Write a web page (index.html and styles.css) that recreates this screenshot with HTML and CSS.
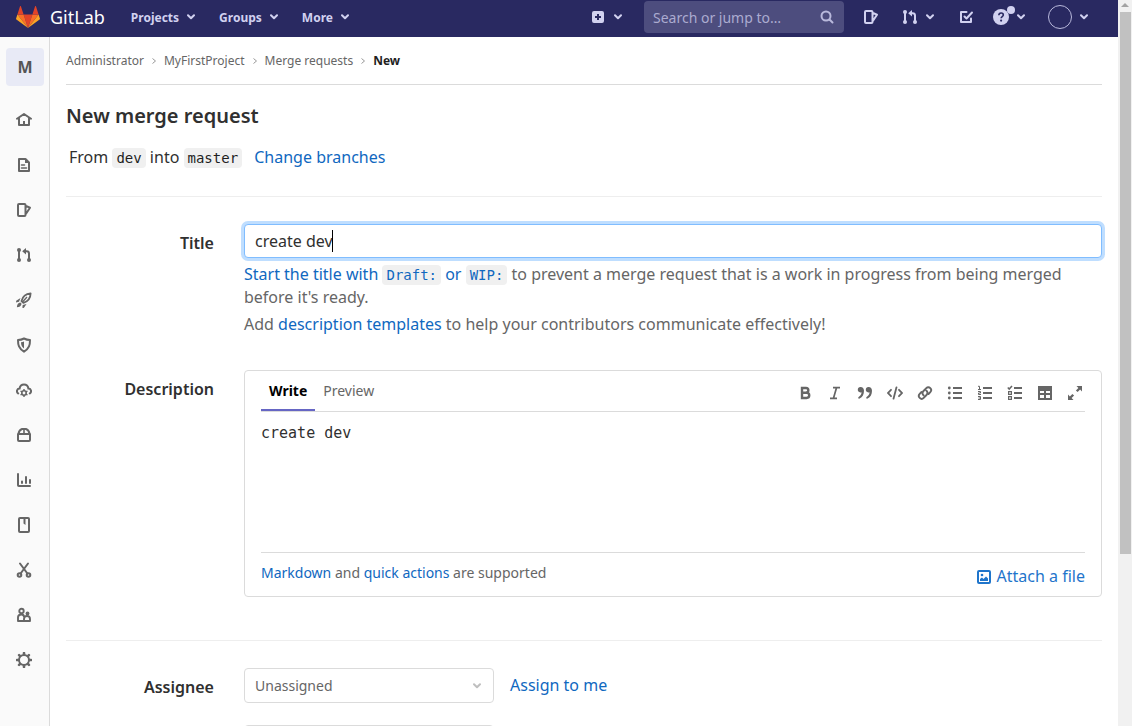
FILE: index.html
```html
<!DOCTYPE html>
<html lang="en">
<head>
<meta charset="utf-8">
<meta name="viewport" content="width=device-width, initial-scale=1">
<title>New merge request · GitLab</title>
<link rel="stylesheet" href="styles.css">
</head>
<body>
<svg class="sprite" aria-hidden="true">
  <symbol id="chevron" viewBox="0 0 8 8"><path d="M1 2.3 4 5.3 7 2.3" fill="none" stroke="currentColor" stroke-width="2" stroke-linecap="round" stroke-linejoin="round"/></symbol>
  <symbol id="issues" viewBox="0 0 16 16"><path d="M3 2h5.500a1 1 0 0 1 1 1v10a1 1 0 0 1-1 1H3a1 1 0 0 1-1-1V3a1 1 0 0 1 1-1zM10 4l4 1.700-4 6" fill="none" stroke="currentColor" stroke-width="2" stroke-linejoin="round"/></symbol>
  <symbol id="merge" viewBox="0 0 16 16"><g fill="none" stroke="currentColor" stroke-width="2"><path d="M3 3v10M9 4.2h1.6A2.4 2.4 0 0 1 13 6.6V13"/></g><g fill="currentColor"><circle cx="3" cy="3" r="2"/><circle cx="3" cy="13" r="2"/><circle cx="13" cy="13" r="2"/><path d="M10 1v6.6L6.2 4.3z"/></g></symbol>
</svg>
<div class="window">
  <header class="navbar">
    <a class="brand" href="#">
      <svg class="tanuki" viewBox="0 0 24 22" aria-hidden="true"><path fill="#e24329" d="m12 22 4.4-13.5H7.6z"/><path fill="#fc6d26" d="M12 22 7.6 8.500H1.4z"/><path fill="#fca326" d="M1.400 8.500.1 12.600a.9.9 0 0 0 .3 1L12 22z"/><path fill="#e24329" d="M1.400 8.500h6.200L4.900.3a.45.45 0 0 0-.86 0z"/><path fill="#fc6d26" d="m12 22 4.400-13.500h6.200z"/><path fill="#fca326" d="m22.600 8.500 1.300 4.100a.9.9 0 0 1-.3 1L12 22z"/><path fill="#e24329" d="M22.600 8.500h-6.200L19.100.3a.45.45 0 0 1 .86 0z"/></svg>
      <span>GitLab</span>
    </a>
    <nav class="menus" aria-label="Main">
      <button class="menu">Projects<svg class="chev"><use href="#chevron"/></svg></button>
      <button class="menu">Groups<svg class="chev"><use href="#chevron"/></svg></button>
      <button class="menu">More<svg class="chev"><use href="#chevron"/></svg></button>
    </nav>
    <div class="tools">
      <button class="tool" aria-label="Create new"><svg class="icon" viewBox="0 0 16 16"><path fill="currentColor" fill-rule="evenodd" d="M4 2h8a2 2 0 0 1 2 2v8a2 2 0 0 1-2 2H4a2 2 0 0 1-2-2V4a2 2 0 0 1 2-2zm3 3v2H5v2h2v2h2V9h2V7H9V5z"/></svg><svg class="chev"><use href="#chevron"/></svg></button>
      <form class="search" role="search">
        <input class="search-input" type="search" placeholder="Search or jump to…" aria-label="Search or jump to">
        <svg class="search-icon" viewBox="0 0 16 16" aria-hidden="true"><g fill="none" stroke="currentColor" stroke-width="2" stroke-linecap="round"><circle cx="7" cy="7" r="4.500"/><path d="m10.500 10.500 3 3"/></g></svg>
      </form>
      <button class="tool near" aria-label="Issues"><svg class="icon"><use href="#issues"/></svg></button>
      <button class="tool" aria-label="Merge requests"><svg class="icon"><use href="#merge"/></svg><svg class="chev"><use href="#chevron"/></svg></button>
      <button class="tool far" aria-label="To-Do List"><svg class="icon" viewBox="0 0 16 16"><g fill="none" stroke="currentColor" stroke-width="2" stroke-linecap="round" stroke-linejoin="round"><path d="M8.500 3H3v10h10V9.500"/><path d="m6.500 7.500 2 2L14 3.500"/></g></svg></button>
      <button class="tool near help" aria-label="Help"><svg class="icon" viewBox="0 0 16 16"><circle cx="8" cy="8" r="8" fill="currentColor"/><path d="M5.800 6.300C5.900 4.800 6.800 4 8.100 4s2.200.8 2.200 2c0 1.500-2.200 1.600-2.200 3.300" fill="none" stroke="#292961" stroke-width="1.600"/><circle cx="8.100" cy="11.600" r="1.100" fill="#292961"/></svg><i class="dot"></i><svg class="chev"><use href="#chevron"/></svg></button>
      <button class="tool" aria-label="Account"><span class="avatar"></span><svg class="chev"><use href="#chevron"/></svg></button>
    </div>
  </header>
  <div class="body">
    <nav class="sidebar" aria-label="Project">
      <a class="project" href="#">M</a>
      <a class="side" href="#" aria-label="Project information"><svg class="icon" viewBox="0 0 16 16"><g fill="none" stroke="currentColor" stroke-width="2" stroke-linecap="round" stroke-linejoin="round"><path d="M1 6.800 8 2l7 4.800M3 6.500V13h10V6.500"/></g><path fill="currentColor" d="M7 9h2v4H7z"/></svg></a>
      <a class="side" href="#" aria-label="Repository"><svg class="icon" viewBox="0 0 16 16"><path d="M3 2h6.500L13 5.500V14H3z" fill="none" stroke="currentColor" stroke-width="2" stroke-linejoin="round"/><path d="M5.500 8h3M5.500 11h5" stroke="currentColor" stroke-width="1.600" stroke-linecap="round"/><path fill="currentColor" d="M9 2v4h4z"/></svg></a>
      <a class="side" href="#" aria-label="Issues"><svg class="icon"><use href="#issues"/></svg></a>
      <a class="side" href="#" aria-label="Merge requests"><svg class="icon"><use href="#merge"/></svg></a>
      <a class="side" href="#" aria-label="CI/CD"><svg class="icon" viewBox="0 0 16 16"><path d="M5.500 9C6.500 5 9.500 1.900 14.600 1.400 14.500 6.500 11.500 9.500 7.400 10.800z" fill="none" stroke="currentColor" stroke-width="1.800" stroke-linejoin="round"/><path d="M6.500 10 11 5" stroke="currentColor" stroke-width="1.300"/><path fill="currentColor" d="M4.500 6 .2 8.700 0 10.500l3-.8zM10.500 12l-2.700 4-1.500-.2.400-2.800zM4.300 10.500C2 11 1 12.500.9 15.200c2.500 0 4.200-.9 4.700-3.400z"/></svg></a>
      <a class="side" href="#" aria-label="Security"><svg class="icon" viewBox="0 0 16 16"><path d="M8 1.500c2 1 4 1.400 6 1.400 0 5-.7 8.600-6 11.800C2.700 11.500 2 7.900 2 2.900c2 0 4-.4 6-1.400z" fill="none" stroke="currentColor" stroke-width="2" stroke-linejoin="round"/><path fill="currentColor" d="M8 4.500v7C6 10 5 8.200 5 5.300c1.200 0 2.200-.3 3-.8z"/></svg></a>
      <a class="side" href="#" aria-label="Operations"><svg class="icon" viewBox="0 0 16 16"><path d="M2.200 11.500C.2 10 .6 6.700 3.600 6.500 4 3.800 6 2.500 8 2.500s4 1.300 4.400 4c3 .2 3.400 3.500 1.400 5" fill="none" stroke="currentColor" stroke-width="2" stroke-linecap="round"/><circle cx="8" cy="11" r="2.200" fill="none" stroke="currentColor" stroke-width="1.600"/><path d="M8 7v2M8 13v2M4.500 9l1.600.9M9.900 12.100l1.600.9M4.500 13l1.600-.9M9.900 9.900l1.600-.9" stroke="currentColor" stroke-width="1.400"/></svg></a>
      <a class="side" href="#" aria-label="Packages"><svg class="icon" viewBox="0 0 16 16"><path d="M2 7h12v6a1 1 0 0 1-1 1H3a1 1 0 0 1-1-1zM2.500 6.500C3 4.500 4.500 2.500 6 2h4c1.500.5 3 2.500 3.500 4.500" fill="none" stroke="currentColor" stroke-width="2" stroke-linejoin="round"/><path fill="currentColor" d="M7.200 2h1.600v4H7.200z"/></svg></a>
      <a class="side" href="#" aria-label="Analytics"><svg class="icon" viewBox="0 0 16 16"><path d="M2 2v11.200a.8.8 0 0 0 .8.8H14M6 9.500V11M10 5v6M14 8v3" fill="none" stroke="currentColor" stroke-width="2" stroke-linecap="round"/></svg></a>
      <a class="side" href="#" aria-label="Wiki"><svg class="icon" viewBox="0 0 16 16"><rect x="3" y="1" width="10" height="14" rx="1" fill="none" stroke="currentColor" stroke-width="2"/><path fill="currentColor" d="M7.500 1h2v7l-2-1.500z"/></svg></a>
      <a class="side" href="#" aria-label="Snippets"><svg class="icon" viewBox="0 0 16 16"><g fill="none" stroke="currentColor" stroke-width="2" stroke-linecap="round"><circle cx="3.500" cy="13" r="1.800"/><circle cx="12.500" cy="13" r="1.800"/><path d="M4 1.500 11.400 11.500M12 1.500 4.600 11.500"/></g></svg></a>
      <a class="side" href="#" aria-label="Members"><svg class="icon" viewBox="0 0 16 16"><g fill="none" stroke="currentColor" stroke-width="1.900"><circle cx="5.500" cy="4" r="2.200"/><path d="M8 14H2v-3.500C2 8.500 3.500 7.500 5.400 7.500 7 7.500 8 8.500 8 10M8 14v-2a2.600 2.600 0 0 1 6 0v2z" stroke-linejoin="round"/></g><circle cx="11.500" cy="6.500" r="1.900" fill="currentColor"/></svg></a>
      <a class="side" href="#" aria-label="Settings"><svg class="icon" viewBox="0 0 16 16"><circle cx="8" cy="8" r="5" fill="none" stroke="currentColor" stroke-width="2"/><path d="M8 1v1.500M8 13.500V15M1 8h1.500M13.500 8H15M3.100 3.100l1 1M11.900 11.900l1 1M12.900 3.100l-1 1M4.100 11.900l-1 1" stroke="currentColor" stroke-width="2.600" stroke-linecap="round"/></svg></a>
    </nav>
    <main class="content">
      <nav class="crumbs" aria-label="Breadcrumb">
        <a href="#">Administrator</a><svg class="sep" viewBox="0 0 10 10"><path d="m3.500 2.500 3 2.500-3 2.500"/></svg>
        <a href="#">MyFirstProject</a><svg class="sep" viewBox="0 0 10 10"><path d="m3.500 2.500 3 2.500-3 2.500"/></svg>
        <a href="#">Merge requests</a><svg class="sep" viewBox="0 0 10 10"><path d="m3.500 2.500 3 2.500-3 2.500"/></svg>
        <a class="current" href="#">New</a>
      </nav>
      <h1 class="title">New merge request</h1>
      <p class="branches">From <code>dev</code> into <code>master</code> <a class="change" href="#">Change branches</a></p>
      <form class="form">
        <div class="row">
          <label class="label" for="mr-title">Title</label>
          <div class="field">
            <div class="title-box"><input class="title-input" id="mr-title" type="text" value="create dev"><i class="caret"></i></div>
            <p class="hint"><a href="#">Start the title with <code>Draft:</code> or <code>WIP:</code></a> to prevent a merge request that is a work in progress from being merged before it's ready.</p>
            <p class="hint">Add <a href="#">description templates</a> to help your contributors communicate effectively!</p>
          </div>
        </div>
        <div class="row description">
          <label class="label" for="mr-description">Description</label>
          <div class="editor">
            <div class="editor-head">
              <div class="tabs"><button type="button" class="tab active">Write</button><button type="button" class="tab">Preview</button></div>
              <div class="format">
                <button type="button" aria-label="Bold"><svg class="icon" viewBox="0 0 16 16"><path d="M5 3h4a2.300 2.300 0 0 1 0 4.700H5zM5 7.700h4.600a2.600 2.600 0 0 1 0 5.300H5z" fill="none" stroke="currentColor" stroke-width="2.400"/></svg></button>
                <button type="button" aria-label="Italic"><svg class="icon" viewBox="0 0 16 16"><path d="M6 2.600h7M3 13.400h7M9.600 2.600 6.400 13.400" fill="none" stroke="currentColor" stroke-width="1.700"/></svg></button>
                <button type="button" aria-label="Quote"><svg class="icon" viewBox="0 0 16 16"><path fill="currentColor" d="M3.600 2A2.700 2.700 0 0 0 3.400 7.400c.5 0 .9-.1 1.200-.2-.2 2.300-1.200 3.600-3 4.700a1 1 0 0 0 1 1.700C5.600 12.200 7 9.500 7 5.800 7 3.500 5.700 2 3.600 2zM11.600 2a2.700 2.700 0 0 0-.2 5.400c.5 0 .9-.1 1.200-.2-.2 2.300-1.200 3.600-3 4.700a1 1 0 0 0 1 1.700c3-1.400 4.400-4.100 4.400-7.800C15 3.500 13.700 2 11.600 2z"/></svg></button>
                <button type="button" aria-label="Code"><svg class="icon" viewBox="0 0 16 16"><path d="M4 4.800.9 8 4 11.200M12 4.800 15.100 8 12 11.200M9.500 2.300l-3 11.400" fill="none" stroke="currentColor" stroke-width="1.800" stroke-linecap="round"/></svg></button>
                <button type="button" aria-label="Link"><svg class="icon" viewBox="0 0 16 16"><path d="M6.500 10.300c-1.300-1.200-1.300-3 0-4.300l2.800-2.900c1.200-1.200 2.800-1.200 4 0s1.100 2.800 0 4L11.500 9M9.500 5.700c1.300 1.200 1.300 3 0 4.300l-2.800 2.900c-1.200 1.200-2.800 1.200-4 0s-1.100-2.800 0-4L4.500 7" fill="none" stroke="currentColor" stroke-width="1.900" stroke-linecap="round"/></svg></button>
                <button type="button" aria-label="Bullet list"><svg class="icon" viewBox="0 0 16 16"><path d="M6 3h9M6 8h9M6 13h9" stroke="currentColor" stroke-width="2"/><g fill="currentColor"><circle cx="2.300" cy="3" r="1.400"/><circle cx="2.300" cy="8" r="1.400"/><circle cx="2.300" cy="13" r="1.400"/></g></svg></button>
                <button type="button" aria-label="Numbered list"><svg class="icon" viewBox="0 0 16 16"><path d="M6 3h9M6 8h9M6 13h9" stroke="currentColor" stroke-width="2"/><path d="M1 1.300h1.500v3M1 4.500h3M1 6.500h2.500V8H1.500v1.500H4M1 11.500h2.500v3H1M1.500 13h2" fill="none" stroke="currentColor"/></svg></button>
                <button type="button" aria-label="Task list"><svg class="icon" viewBox="0 0 16 16"><path d="M7 3h8M7 8h8M7 13h8" stroke="currentColor" stroke-width="2"/><path d="m.8 2.600 1.400 1.500L5 1" fill="none" stroke="currentColor" stroke-width="1.500"/><path d="M1.600 6.600h2.800v2.800H1.600zM1.600 11.600h2.800v2.800H1.600z" fill="none" stroke="currentColor" stroke-width="1.200"/></svg></button>
                <button type="button" aria-label="Table"><svg class="icon" viewBox="0 0 16 16"><path fill="currentColor" fill-rule="evenodd" d="M1 1h14v14H1zm2 5v2h4V6zm6 0v2h4V6zM3 10v3h4v-3zm6 0v3h4v-3z"/></svg></button>
                <button type="button" aria-label="Full screen"><svg class="icon" viewBox="0 0 16 16"><path fill="currentColor" d="M9.500 1H15v5.500l-1.900-1.900-2.500 2.500-1.700-1.700 2.500-2.500zM1 9.500V15h5.500l-1.900-1.900 2.500-2.500-1.700-1.700-2.500 2.500z"/></svg></button>
              </div>
            </div>
            <textarea class="editor-text" id="mr-description">create dev</textarea>
            <div class="editor-foot">
              <p><a href="#">Markdown</a> and <a href="#">quick actions</a> are supported</p>
              <button type="button" class="attach"><svg class="icon" viewBox="0 0 16 16"><rect x="2" y="2" width="12" height="12" rx="1" fill="none" stroke="currentColor" stroke-width="2"/><circle cx="6" cy="6" r="1.300" fill="currentColor"/><path fill="currentColor" d="M4 12V10l2-1.500L7.500 10 10 7.500l2 2V12z"/></svg>Attach a file</button>
            </div>
          </div>
        </div>
        <div class="row people">
          <label class="label" for="assignee">Assignee</label>
          <div class="field pick">
            <span class="select-box"><select class="select" id="assignee"><option>Unassigned</option></select><svg class="select-chev"><use href="#chevron"/></svg></span>
            <a href="#">Assign to me</a>
          </div>
        </div>
        <div class="row next"><span></span><div class="field"><select class="select" aria-label="Reviewer"><option>Unassigned</option></select></div></div>
      </form>
    </main>
  </div>
</div>
<div class="scrollbar" aria-hidden="true"><i class="arrow"></i><i class="thumb"></i></div>
</body>
</html>
```
FILE: styles.css
```css
* { box-sizing: border-box; }

body {
  margin: 0;
  height: 100vh;
  overflow: hidden;
  display: grid;
  grid-template-columns: 1fr 14px;
  font: 16px/23px "Noto Sans", sans-serif;
  color: #303030;
  background: #fff;
}

p, h1 { margin: 0; }
a { color: #1068bf; text-decoration: none; }
button { border: 0; padding: 0; background: none; color: inherit; font: inherit; }

code {
  padding: 2px 4px;
  border-radius: 4px;
  background: #f0f0f0;
  color: #1f1f1f;
  font: 14px "DejaVu Sans Mono", monospace;
}
a code { color: inherit; }

.sprite { position: absolute; width: 0; height: 0; }
.icon { display: block; width: 16px; height: 16px; flex: none; }
.chev { display: block; width: 8px; height: 8px; flex: none; }

.window {
  min-width: 0;
  height: 100vh;
  overflow: hidden;
  display: flex;
  flex-direction: column;
}

/* Top bar */
.navbar {
  flex: none;
  height: 37px;
  padding: 0 30px 3px 16px;
  display: flex;
  align-items: center;
  background: #292961;
  color: #d1d1f0;
}
.brand { display: flex; align-items: center; gap: 10px; color: #fff; font-size: 18px; }
.tanuki { width: 24px; height: 22px; }
.menus { display: flex; gap: 24px; margin-left: 26px; }
.menu { display: flex; align-items: center; gap: 8px; font-size: 12px; font-weight: 700; }
.tools { margin-left: auto; display: flex; align-items: center; }
.tool { position: relative; display: flex; align-items: center; gap: 8px; margin-left: 23px; }
.tool.near { margin-left: 19px; }
.tool.far { margin-left: 24px; }
.search { position: relative; margin-left: 22px; display: flex; }
.search-input {
  width: 200px;
  height: 32px;
  padding: 0 32px 0 9px;
  border: 0;
  border-radius: 4px;
  background: #4d4d7e;
  color: #d1d1f0;
  font: 14px "Noto Sans", sans-serif;
}
.search-input::placeholder { color: #ababd0; opacity: 1; }
.search-icon { position: absolute; right: 9px; top: 8px; width: 16px; height: 16px; color: #b9b9dc; }
.dot { position: absolute; left: 14px; top: -3px; width: 8px; height: 8px; border-radius: 50%; background: #d1d1f0; }
.avatar { width: 24px; height: 24px; border: 1px solid #b9b9dc; border-radius: 50%; }

/* Sidebar */
.body { flex: 1; min-height: 0; display: flex; }
.sidebar {
  flex: none;
  width: 50px;
  padding: 11px 5px 0 6px;
  border-right: 1px solid #dbdbdb;
  background: #fafafa;
}
.project {
  display: grid;
  place-items: center;
  height: 38px;
  margin-bottom: 11px;
  border-radius: 4px;
  background: #e8eaf6;
  color: #555;
  font-weight: 700;
}
.side { display: grid; place-items: center; height: 45px; padding-right: 2px; color: #666; }

/* Content */
.content { flex: 1; min-width: 0; padding: 0 16px; }
.crumbs {
  height: 48px;
  display: flex;
  align-items: center;
  gap: 5px;
  border-bottom: 1px solid #dbdbdb;
  font-size: 12px;
}
.crumbs a { color: #666; }
.crumbs .current { color: #1f1f1f; font-weight: 700; }
.sep { width: 10px; height: 10px; fill: none; stroke: #999; }
.title { margin-top: 19px; font-size: 20px; font-weight: 600; line-height: 24px; }
.branches { margin-top: 18px; padding: 0 3px 27px; border-bottom: 1px solid #eee; }
.change { margin-left: 8px; }

.row { display: grid; grid-template-columns: 148px minmax(0, 1fr); column-gap: 30px; }
.form > .row:first-child { padding-top: 27px; }
.label { padding-top: 8px; text-align: right; font-weight: 600; }
.title-box { position: relative; margin-bottom: 5px; }
.title-input {
  display: block;
  width: 100%;
  height: 34px;
  padding: 0 10px;
  border: 1px solid #80bdff;
  border-radius: 4px;
  outline: 0;
  box-shadow: 0 0 0 3px #bfdeff;
  color: #303030;
  font: 16px "Noto Sans", sans-serif;
}
.caret { position: absolute; left: 88px; top: 6px; width: 1px; height: 22px; background: #000; }
.hint { margin-bottom: 4px; color: #666; }

.description { margin-top: 30px; padding-bottom: 43px; border-bottom: 1px solid #eee; }
.editor { padding: 0 16px; border: 1px solid #dbdbdb; border-radius: 4px; }
.editor-head { height: 41px; display: flex; justify-content: space-between; align-items: stretch; border-bottom: 1px solid #dbdbdb; }
.tabs { display: flex; }
.tab { padding: 0 8px; border-bottom: 2px solid transparent; color: #666; font-size: 14px; }
.tab.active { border-color: #6666c4; color: #000; font-weight: 700; }
.format { display: flex; align-items: center; gap: 14px; padding: 3px 2px 0 0; color: #666; }
.editor-text {
  display: block;
  width: 100%;
  height: 140px;
  padding: 11px 0;
  border: 0;
  outline: 0;
  resize: none;
  color: #303030;
  font: 15px/20px "DejaVu Sans Mono", monospace;
}
.editor-foot {
  height: 44px;
  display: flex;
  justify-content: space-between;
  align-items: flex-start;
  padding-top: 8px;
  border-top: 1px solid #dbdbdb;
  color: #666;
  font-size: 14px;
}
.attach { display: flex; align-items: center; gap: 5px; padding-top: 4px; color: #1f75cb; font-size: 16px; }

.people { padding-top: 27px; }
.pick { display: flex; align-items: center; gap: 16px; }
.select-box { position: relative; }
.select {
  appearance: none;
  display: block;
  width: 250px;
  height: 35px;
  padding: 0 10px;
  border: 1px solid #dbdbdb;
  border-radius: 4px;
  background: #fff;
  color: #666;
  font: 14px "Noto Sans", sans-serif;
}
.select-chev { position: absolute; right: 13px; top: 14px; width: 8px; height: 8px; color: #bfbfbf; }
.next { padding-top: 22px; }

/* Page scrollbar */
.scrollbar { display: flex; flex-direction: column; align-items: center; gap: 5px; padding-top: 3px; background: #f1f1f1; }
.arrow { border: 4px solid transparent; border-top: 0; border-bottom: 4px solid #a3a3a3; }
.thumb { width: 11px; height: 75%; background: #c1c1c1; }
```
